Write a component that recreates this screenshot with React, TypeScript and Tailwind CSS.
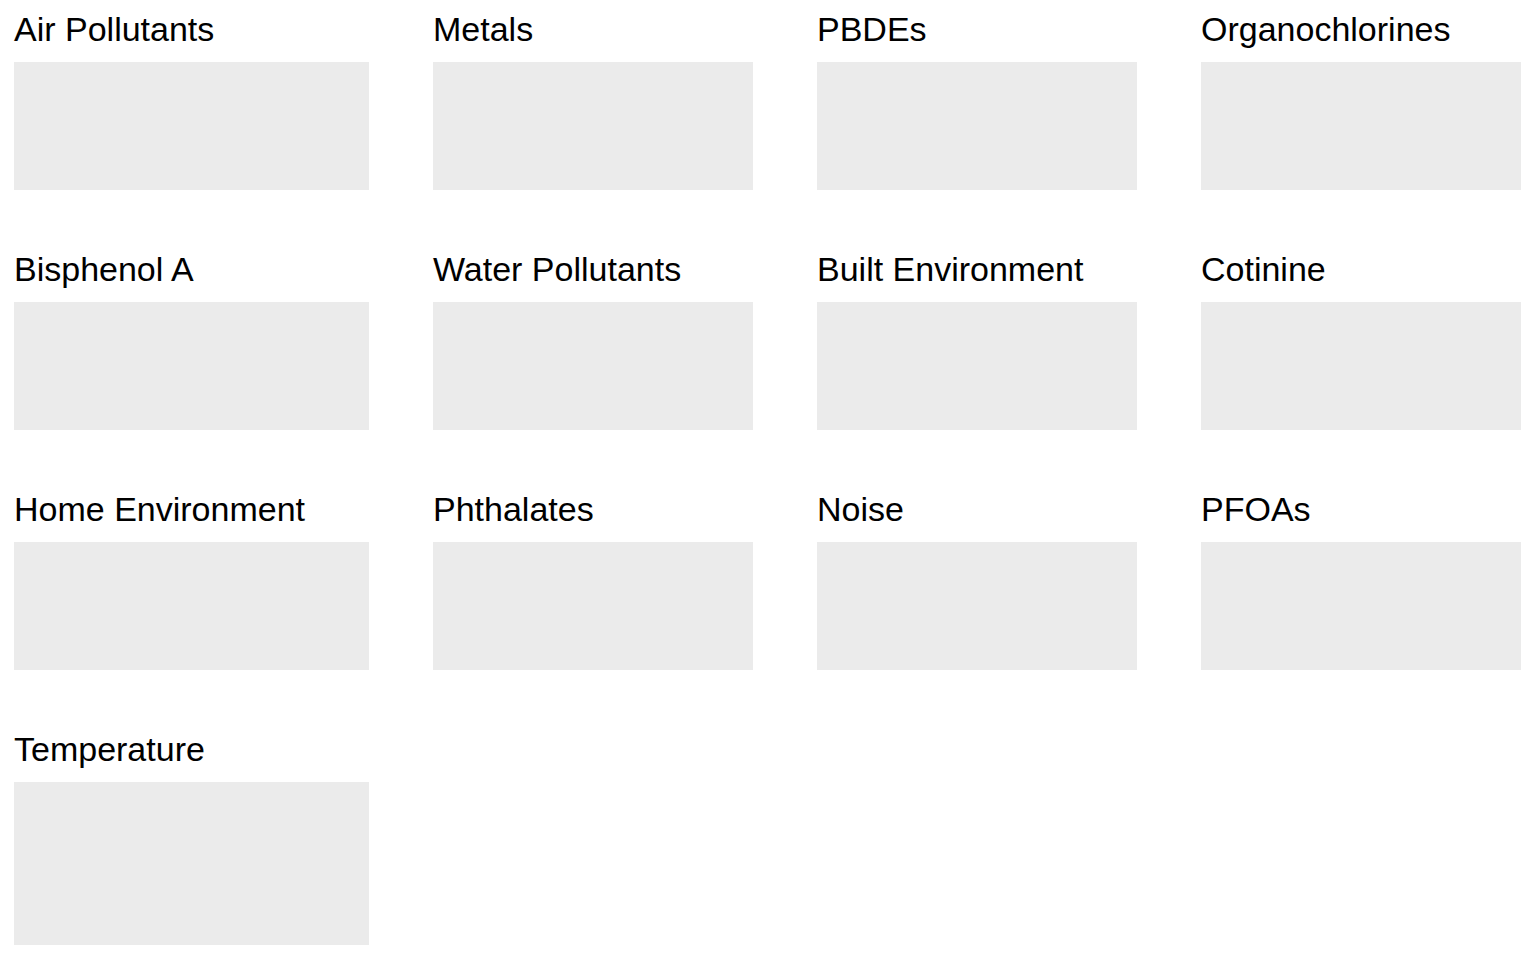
import React from "react";

const categories = [
	"Air Pollutants",
	"Metals",
	"PBDEs",
	"Organochlorines",
	"Bisphenol A",
	"Water Pollutants",
	"Built Environment",
	"Cotinine",
	"Home Environment",
	"Phthalates",
	"Noise",
	"PFOAs",
	"Temperature",
];

export default function App() {
	return (
		<div className="min-h-screen bg-white text-black font-['Liberation_Sans',Arial,sans-serif]">
			<div className="grid grid-cols-[355px_320px_320px_320px] gap-x-16 gap-y-[60px] pl-[14px] pt-[10px]">
				{categories.map((name, idx) => (
					<div key={name}>
						<h2 className="text-[34px] leading-[39px] font-normal whitespace-nowrap">
							{name}
						</h2>
						<div
							className={`mt-[13px] bg-[#ebebeb] ${idx === categories.length - 1 ? "h-[163px]" : "h-[128px]"}`}
						/>
					</div>
				))}
			</div>
		</div>
	);
}
